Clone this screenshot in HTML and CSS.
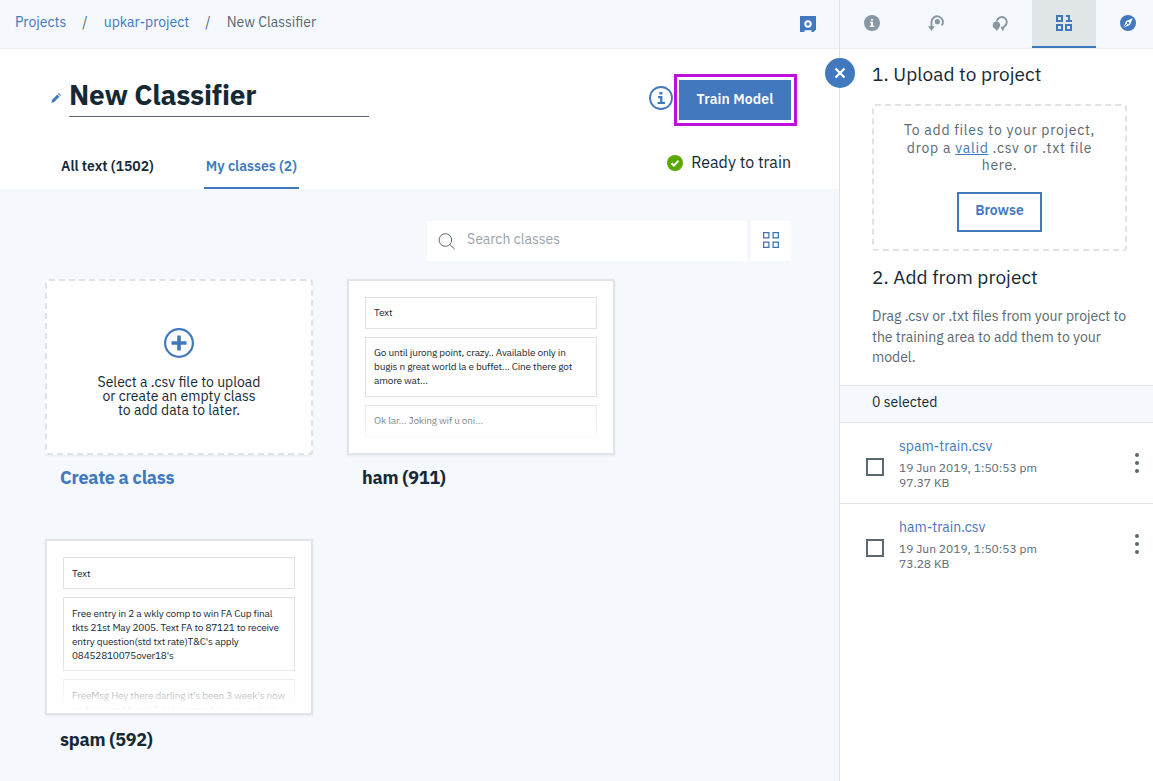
FILE: index.html
```html
<!DOCTYPE html>
<html lang="en">
<head>
    <meta charset="UTF-8">
    <meta name="viewport" content="width=device-width, initial-scale=1.0">
    <title>New Classifier</title>
    <link rel="stylesheet" href="styles.css">
</head>
<body>
    <div class="app">
        <div class="main">
            <!-- Breadcrumb bar -->
            <header class="topbar">
                <nav class="breadcrumb">
                    <a href="#">Projects</a>
                    <span class="sep">/</span>
                    <a href="#">upkar-project</a>
                    <span class="sep">/</span>
                    <span>New Classifier</span>
                </nav>
                <svg class="asset-icon" width="16" height="16" viewBox="0 0 16 16">
                    <path fill="#4178be" d="M0 0h16v13.5L13.5 16H0z"/>
                    <circle cx="8" cy="8" r="2.7" fill="none" stroke="#fff" stroke-width="2"/>
                    <path fill="#fff" d="M4.5 14.3h7V16h-7z"/>
                </svg>
            </header>

            <!-- Title, train button and tabs -->
            <section class="model-header">
                <div class="title-row">
                    <svg class="pencil" width="10" height="10" viewBox="0 0 10 10" fill="#4178be">
                        <path d="M.3 9.8L1 6.900 6.300 1.600l2.200 2.200-5.300 5.300z"/>
                        <path d="M7 .9l.8-.8L10 2.300l-.8.8z"/>
                    </svg>
                    <h1>New Classifier</h1>
                    <svg class="info-icon" width="24" height="24" viewBox="0 0 24 24">
                        <circle cx="12" cy="12" r="11" fill="#fff" stroke="#4178be" stroke-width="1.8"/>
                        <path fill="#4178be" d="M10.400 6h3v2.400h-3zM9 10.100h4.400v5.800H16V18H8.500v-2.100h2.600v-3.700H9z"/>
                    </svg>
                    <div class="train-highlight">
                        <button class="btn-train">Train Model</button>
                    </div>
                </div>
                <div class="tabs-row">
                    <a href="#" class="tab">All text (1502)</a>
                    <a href="#" class="tab active">My classes (2)</a>
                    <div class="status">
                        <svg width="16" height="16" viewBox="0 0 16 16">
                            <circle cx="8" cy="8" r="8" fill="#5aa700"/>
                            <path d="M4.500 8.200l2.400 2.400 4.600-4.800" fill="none" stroke="#fff" stroke-width="2"/>
                        </svg>
                        <span>Ready to train</span>
                    </div>
                </div>
            </section>

            <!-- Classes -->
            <section class="classes">
                <div class="tools">
                    <div class="search">
                        <svg width="17" height="17" viewBox="0 0 17 17" fill="none" stroke="#5a6872" stroke-width="1">
                            <circle cx="7.400" cy="7" r="6.300"/>
                            <path d="M11.900 11.500l4.700 4.700"/>
                        </svg>
                        <span>Search classes</span>
                    </div>
                    <button class="grid-toggle">
                        <svg width="16" height="16" viewBox="0 0 16 16" fill="none" stroke="#3d70b2" stroke-width="1.200">
                            <path d="M.6.6h5.300v5.300H.6zM10.100.6h5.300v5.300h-5.300zM.6 10.100h5.300v5.300H.6zM10.100 10.100h5.300v5.300h-5.300z"/>
                        </svg>
                    </button>
                </div>

                <div class="class-grid">
                    <div class="class-item">
                        <div class="card card-create">
                            <svg width="30" height="30" viewBox="0 0 30 30" fill="none" stroke="#4178be">
                                <circle cx="15" cy="15" r="13.900" stroke-width="2.200"/>
                                <path d="M15 7.500v15M7.500 15h15" stroke-width="3.600"/>
                            </svg>
                            <p>Select a .csv file to upload<br>or create an empty class<br>to add data to later.</p>
                        </div>
                        <h2 class="link">Create a class</h2>
                    </div>

                    <div class="class-item">
                        <div class="card">
                            <div class="sample">Text</div>
                            <div class="sample">Go until jurong point, crazy.. Available only in<br>bugis n great world la e buffet... Cine there got<br>amore wat...</div>
                            <div class="sample">Ok lar... Joking wif u oni...</div>
                        </div>
                        <h2>ham (911)</h2>
                    </div>

                    <div class="class-item second-row">
                        <div class="card">
                            <div class="sample">Text</div>
                            <div class="sample">Free entry in 2 a wkly comp to win FA Cup final<br>tkts 21st May 2005. Text FA to 87121 to receive<br>entry question(std txt rate)T&amp;C's apply<br>08452810075over18's</div>
                            <div class="sample">FreeMsg Hey there darling it's been 3 week's now<br>and no word back! I'd like some fun you up for it</div>
                        </div>
                        <h2>spam (592)</h2>
                    </div>
                </div>
            </section>
        </div>

        <aside class="sidebar">
            <button class="close-btn">
                <svg width="12" height="12" viewBox="0 0 12 12" stroke="#fff" stroke-width="2.200">
                    <path d="M1.500 1.500l9 9M10.500 1.500l-9 9"/>
                </svg>
            </button>

            <div class="side-tabs">
                <a href="#">
                    <svg width="16" height="16" viewBox="0 0 16 16">
                        <circle cx="8" cy="8" r="8" fill="#8897a2"/>
                        <path fill="#fff" d="M7 4h2v1.600H7zM6 6.700h3v4h1.300V12H5.700v-1.300H7V8H6z"/>
                    </svg>
                </a>
                <a href="#">
                    <svg width="16" height="16" viewBox="0 0 16 16">
                        <path d="M3.500 14V7a5.700 5.700 0 1 1 10.200 3.500" fill="none" stroke="#8897a2" stroke-width="1.900"/>
                        <path fill="#8897a2" d="M0 11.200h7L3.500 16z"/>
                        <circle cx="9.300" cy="6.700" r="2.600" fill="#8897a2"/>
                    </svg>
                </a>
                <a href="#">
                    <svg width="16" height="16" viewBox="0 0 16 16">
                        <path d="M4.900 6a5 5 0 1 1 7.900 5l-1.100.8-.9 2.400-1.400-2.300" fill="none" stroke="#8897a2" stroke-width="1.900"/>
                        <path fill="#8897a2" d="M4.300 6.200a4.100 4.100 0 0 1 2.400 7.300L4.900 16l-1.500-1.900a4.100 4.100 0 0 1 .9-7.900z"/>
                    </svg>
                </a>
                <a href="#" class="active">
                    <svg width="16" height="16" viewBox="0 0 16 16" fill="none" stroke="#4178be" stroke-width="2">
                        <path d="M1 1h5v5H1zM1 10h5v5H1zM10 10h5v5h-5z"/>
                        <path d="M10 1h3v5M10 6h6"/>
                    </svg>
                </a>
                <a href="#">
                    <svg width="16" height="16" viewBox="0 0 16 16">
                        <circle cx="8" cy="8" r="8" fill="#4178be"/>
                        <path fill="#fff" d="M12.700 3.300L9.900 9.900l-6.600 2.800L6.100 6.100z"/>
                        <path d="M3.300 12.700l4-4" stroke="#4178be"/>
                        <circle cx="8" cy="8" r="1.200" fill="#4178be"/>
                    </svg>
                </a>
            </div>

            <div class="side-section">
                <h3>1. Upload to project</h3>
                <div class="dropzone">
                    <p>To add files to your project,<br>drop a <a href="#">valid</a> .csv or .txt file<br>here.</p>
                    <button class="btn-browse">Browse</button>
                </div>
                <h3>2. Add from project</h3>
                <p class="hint">Drag .csv or .txt files from your project to<br>the training area to add them to your<br>model.</p>
            </div>

            <div class="selected-bar">0 selected</div>

            <div class="file-row">
                <span class="checkbox"></span>
                <div class="file-info">
                    <a href="#">spam-train.csv</a>
                    <p>19 Jun 2019, 1:50:53 pm<br>97.37 KB</p>
                </div>
                <span class="overflow-menu"><i></i><i></i><i></i></span>
            </div>
            <div class="file-row">
                <span class="checkbox"></span>
                <div class="file-info">
                    <a href="#">ham-train.csv</a>
                    <p>19 Jun 2019, 1:50:53 pm<br>73.28 KB</p>
                </div>
                <span class="overflow-menu"><i></i><i></i><i></i></span>
            </div>
        </aside>
    </div>
</body>
</html>
```
FILE: styles.css
```css
* {
    box-sizing: border-box;
}

body {
    margin: 0;
    font-family: "IBM Plex Sans", Roboto, "Liberation Sans", sans-serif;
    font-size: 14px;
    color: #152935;
    background: #fff;
}

h1, h2, h3, p {
    margin: 0;
}

a {
    color: #4178be;
    text-decoration: none;
}

button {
    font-family: inherit;
    padding: 0;
    border: none;
}

svg {
    display: block;
    flex-shrink: 0;
}

.app {
    display: flex;
    width: 1153px;
    height: 781px;
    overflow: hidden;
}

.main {
    display: flex;
    flex-direction: column;
    width: 839px;
}

/* top bar */
.topbar {
    display: flex;
    flex-shrink: 0;
    justify-content: space-between;
    height: 49px;
    padding: 0 23px 0 15px;
    background: #f5f8fd;
    border-bottom: 1px solid #ebeef2;
}

.breadcrumb {
    display: flex;
    height: 44px;
    align-items: center;
    color: #5a6872;
}

.sep {
    width: 37.5px;
    text-align: center;
}

.asset-icon {
    margin-top: 16px;
}

/* title + tabs */
.model-header {
    flex-shrink: 0;
    height: 140px;
}

.title-row {
    display: flex;
    height: 86px;
    padding: 25px 42px 0 51px;
}

.pencil {
    margin: 19px 8px 0 0;
}

h1 {
    width: 300px;
    height: 43px;
    border-bottom: 1px solid #5a6872;
    font-size: 28px;
    line-height: 41px;
    font-weight: 700;
    letter-spacing: -0.2px;
}

.info-icon {
    margin: 12px 1px 0 auto;
}

.train-highlight {
    height: 52px;
    padding: 3px;
    border: 3px solid #c00ede;
}

.btn-train {
    width: 112px;
    height: 40px;
    margin-left: -1px;
    padding-bottom: 2px;
    background: #4178be;
    color: #fff;
    font-size: 14px;
    font-weight: 600;
    letter-spacing: 0.1px;
}

.tabs-row {
    display: flex;
    height: 54px;
    padding: 0 48px 0 59px;
}

.tab {
    height: 54px;
    margin-right: 48px;
    padding: 0 2px;
    line-height: 63px;
    color: #152935;
    font-weight: 600;
}

.tab.active {
    color: #4178be;
    border-bottom: 2px solid #4178be;
}

.status {
    display: flex;
    gap: 8px;
    margin-left: auto;
    padding-top: 20px;
    font-size: 16px;
    line-height: 14px;
}

/* class list */
.classes {
    flex: 1;
    min-height: 0;
    padding: 32px 48px 0 45px;
    background: #f5f8fd;
}

.tools {
    display: flex;
    justify-content: flex-end;
    gap: 4px;
    height: 40px;
    margin-bottom: 18px;
}

.search {
    display: flex;
    gap: 12px;
    width: 320px;
    padding: 12px 12px 0 11px;
    background: #fff;
    color: #9aa4ab;
    line-height: 13px;
}

.grid-toggle {
    display: flex;
    align-items: center;
    justify-content: center;
    width: 40px;
    padding-bottom: 2px;
    background: #fff;
}

.class-grid {
    display: grid;
    grid-template-columns: 268px 268px;
    grid-auto-rows: 260px;
    column-gap: 34px;
}

.card {
    position: relative;
    height: 176px;
    padding: 16px;
    overflow: hidden;
    background: #fff;
    border: 2px solid #e2e5e8;
    box-shadow: 0 1px 2px rgba(0, 0, 0, 0.06);
}

/* fade out the samples at the bottom of the card */
.card::after {
    content: "";
    position: absolute;
    left: 0;
    right: 0;
    bottom: 0;
    height: 54px;
    background: linear-gradient(rgba(255, 255, 255, 0), #fff 95%);
}

.card-create {
    display: flex;
    flex-direction: column;
    align-items: center;
    padding-top: 47px;
    border: 2px dashed #e0e3e6;
    border-radius: 4px;
    text-align: center;
    line-height: 14px;
}

.card-create::after {
    display: none;
}

.card-create p {
    margin-top: 17px;
}

.sample {
    margin-bottom: 8px;
    padding: 8px;
    border: 1px solid #dfe3e6;
    font-size: 10px;
    line-height: 14px;
    letter-spacing: -0.17px;
    white-space: nowrap;
}

h2 {
    padding: 10px 15px;
    font-size: 18px;
    line-height: 26px;
    font-weight: 700;
    letter-spacing: -0.25px;
}

h2.link {
    color: #4178be;
}

.second-row .sample {
    padding: 9px 8px 7px;
}

.second-row h2 {
    padding-top: 12px;
}

/* sidebar */
.sidebar {
    position: relative;
    width: 314px;
    border-left: 1px solid #dfe3e6;
}

.close-btn {
    position: absolute;
    top: 58px;
    left: -15px;
    display: flex;
    align-items: center;
    justify-content: center;
    width: 30px;
    height: 30px;
    border-radius: 50%;
    background: #4178be;
}

.side-tabs {
    display: flex;
    height: 49px;
    background: #f5f8fd;
    border-bottom: 1px solid #ebeef2;
}

.side-tabs a {
    display: flex;
    flex: 0 0 64px;
    justify-content: center;
    height: 48px;
    padding-top: 15px;
}

.side-tabs a.active {
    background: #e1e6e9;
    border-bottom: 2px solid #4178be;
}

.side-section {
    height: 336px;
    padding: 12px 26px 0 32px;
}

h3 {
    font-size: 19px;
    line-height: 26px;
    font-weight: 400;
    letter-spacing: 0.07px;
}

.dropzone {
    height: 147px;
    margin: 17px 0 13px;
    padding-top: 16px;
    border: 2px dashed #e0e3e6;
    border-radius: 3px;
    text-align: center;
    color: #5a6872;
    line-height: 17.5px;
    letter-spacing: 0.73px;
}

.dropzone a {
    text-decoration: underline;
}

.btn-browse {
    width: 85px;
    height: 40px;
    margin-top: 17px;
    padding-bottom: 4px;
    border: 2px solid #4178be;
    background: #fff;
    color: #4178be;
    font-size: 14px;
    font-weight: 600;
}

.hint {
    margin-top: 16px;
    color: #5a6872;
    line-height: 20.5px;
    white-space: nowrap;
}

.selected-bar {
    height: 38px;
    padding-left: 32px;
    background: #f5f8fd;
    border-top: 1px solid #dfe3e6;
    border-bottom: 1px solid #dfe3e6;
    line-height: 32px;
}

.file-row {
    display: flex;
    height: 81px;
    padding: 13px 14px 0 26px;
    border-bottom: 1px solid #dfe3e6;
}

.file-row:last-child {
    border-bottom: none;
}

.checkbox {
    width: 18px;
    height: 18px;
    margin: 22px 15px 0 0;
    border: 2px solid #5a6872;
}

.file-info {
    flex: 1;
}

.file-info a {
    display: block;
    line-height: 20px;
}

.file-info p {
    margin-top: 4px;
    color: #5a6872;
    font-size: 12px;
    line-height: 15px;
}

.overflow-menu {
    display: flex;
    flex-direction: column;
    gap: 4px;
    padding-top: 17px;
}

.overflow-menu i {
    width: 4px;
    height: 4px;
    border-radius: 50%;
    background: #5a6872;
}
```
